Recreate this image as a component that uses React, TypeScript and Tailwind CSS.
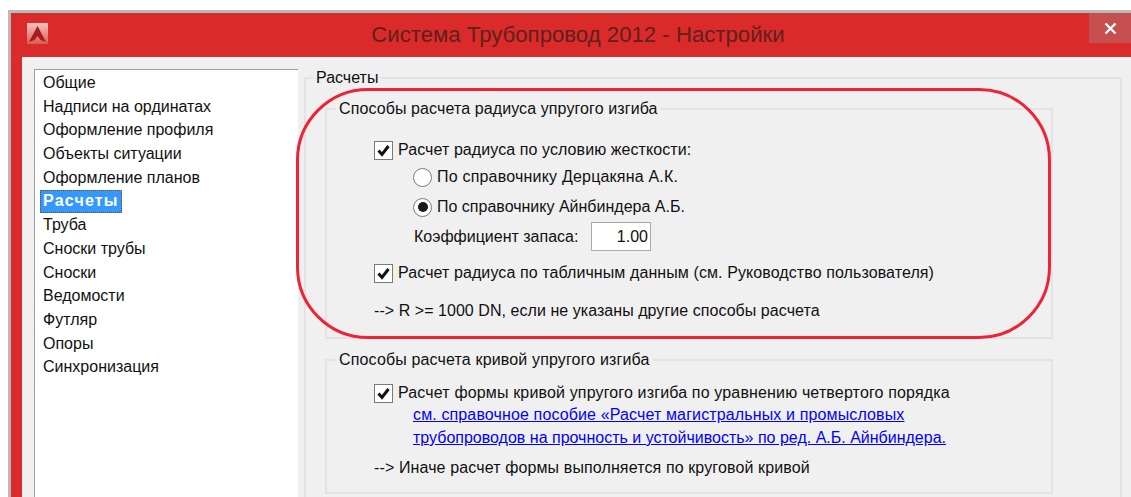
import React from 'react';

const sections = [
  'Общие',
  'Надписи на ординатах',
  'Оформление профиля',
  'Объекты ситуации',
  'Оформление планов',
  'Расчеты',
  'Труба',
  'Сноски трубы',
  'Сноски',
  'Ведомости',
  'Футляр',
  'Опоры',
  'Синхронизация',
];

function CheckBox() {
  return (
    <span className="flex h-[19px] w-[19px] shrink-0 items-center justify-center border border-[#7a7a7a] bg-white">
      <svg width="15" height="15" viewBox="0 0 15 15">
        <path d="M2.5 7.5 L6 11.5 L12.5 3" fill="none" stroke="#111" strokeWidth="3" />
      </svg>
    </span>
  );
}

function Radio({ checked }: { checked?: boolean }) {
  return (
    <span className="flex h-[19px] w-[19px] shrink-0 items-center justify-center rounded-full border border-[#7a7a7a] bg-white">
      {checked && <span className="h-[10px] w-[10px] rounded-full bg-[#1a1a1a]" />}
    </span>
  );
}

export default function App() {
  return (
    <div className="relative h-[497px] w-[1131px] overflow-hidden bg-white font-['Liberation_Sans',sans-serif] text-[16px] leading-[22px] text-[#111]">
      <div className="ml-[8px] mt-[10px] h-[487px] border-l-[3px] border-t-[3px] border-[#b9b9b9] bg-[#db2a2a]">
        {/* title bar */}
        <div className="relative flex h-[44px] items-center justify-center border-b border-[#c43a3a] pl-[14px]">
          <svg className="absolute left-[16px] top-[10px]" width="21" height="21" viewBox="0 0 21 21">
            <defs>
              <linearGradient id="logoBg" x1="0" y1="0" x2="0" y2="1">
                <stop offset="0" stopColor="#f3c4be" />
                <stop offset="1" stopColor="#dd5a55" />
              </linearGradient>
            </defs>
            <rect width="21" height="21" fill="url(#logoBg)" />
            <path d="M10.5 3 L19 19 L13.5 17 L10.5 13 L7.5 17 L2 19 Z" fill="#a81c1c" />
          </svg>
          <span className="text-[22.2px] text-[#5e211c]">Система Трубопровод 2012 - Настройки</span>
          <div className="absolute right-0 top-0 flex h-[30px] w-[42px] items-center justify-center bg-[#c65050]">
            <svg width="13" height="13" viewBox="0 0 13 13">
              <path d="M1.5 1.5 L11.5 11.5 M11.5 1.5 L1.5 11.5" stroke="#fff" strokeWidth="2.4" />
            </svg>
          </div>
        </div>

        {/* dialog body */}
        <div className="ml-[11px] flex h-[440px] gap-[6px] bg-[#f0f0f0] pl-[12px] pt-[12px]">
          <ul className="h-[440px] w-[264px] shrink-0 border-l border-t border-l-[#a0a0a0] border-t-[#a0a0a0] bg-white pl-[8px] pt-[1px]">
            {sections.map((name) => (
              <li key={name} className="h-[23.7px] leading-[23px]">
                {name === 'Расчеты' ? (
                  <span className="ml-[-3px] inline-block h-[23px] border border-dotted border-[#7a4a10] bg-[#3399ff] px-[2px] font-bold leading-[20px] tracking-[1.2px] text-white">
                    {name}
                  </span>
                ) : (
                  name
                )}
              </li>
            ))}
          </ul>

          <fieldset className="mr-[9px] h-[460px] flex-1 border-2 border-[#e3e3e3] pl-[19px] pr-[67px]">
            <legend className="ml-[-12px] px-[3px] leading-[18px]">Расчеты</legend>

            <fieldset className="mt-[13px] h-[239px] border-2 border-[#e3e3e3] pl-[47px]">
              <legend className="ml-[-38px] px-[3px] leading-[18px] tracking-[0.1px]">Способы расчета радиуса упругого изгиба</legend>
              <div className="mt-[21px] flex items-center gap-[5px]">
                <CheckBox />
                <span className="tracking-[0.08px]">Расчет радиуса по условию жесткости:</span>
              </div>
              <div className="ml-[39px] mt-[5px] flex items-center gap-[5px]">
                <Radio />
                <span className="tracking-[0.2px]">По справочнику Дерцакяна А.К.</span>
              </div>
              <div className="ml-[39px] mt-[8px] flex items-center gap-[5px]">
                <Radio checked />
                <span>По справочнику Айнбиндера А.Б.</span>
              </div>
              <div className="ml-[40px] mt-[4px] flex items-center">
                <span className="w-[177px]">Коэффициент запаса:</span>
                <span className="h-[29px] w-[60px] border border-[#a9a9a9] bg-white pr-[2px] text-right leading-[27px]">1.00</span>
              </div>
              <div className="mt-[11px] flex items-center gap-[5px]">
                <CheckBox />
                <span className="tracking-[0.09px]">Расчет радиуса по табличным данным (см. Руководство пользователя)</span>
              </div>
              <div className="mt-[16px] tracking-[0.05px]">--&gt; R &gt;= 1000 DN, если не указаны другие способы расчета</div>
            </fieldset>

            <fieldset className="mt-[12px] h-[143px] border-2 border-[#e3e3e3] pl-[47px]">
              <legend className="ml-[-38px] px-[3px] leading-[18px] tracking-[0.15px]">Способы расчета кривой упругого изгиба</legend>
              <div className="mt-[13px] flex items-center gap-[5px]">
                <CheckBox />
                <span className="tracking-[0.15px]">Расчет формы кривой упругого изгиба по уравнению четвертого порядка</span>
              </div>
              <div className="ml-[39px] mt-[-1px] leading-[23px] text-[#0000ff] underline">
                <div className="tracking-[0.13px]">см. справочное пособие «Расчет магистральных и промысловых</div>
                <div>трубопроводов на прочность и устойчивость» по ред. А.Б. Айнбиндера.</div>
              </div>
              <div className="mt-[8px] tracking-[0.12px]">--&gt; Иначе расчет формы выполняется по круговой кривой</div>
            </fieldset>
          </fieldset>
        </div>
      </div>

      {/* red callout drawn over the first group */}
      <div className="pointer-events-none absolute left-[296px] top-[88px] h-[251px] w-[755px] rounded-[72px] border-[3px] border-[#ee2436]" />
    </div>
  );
}
